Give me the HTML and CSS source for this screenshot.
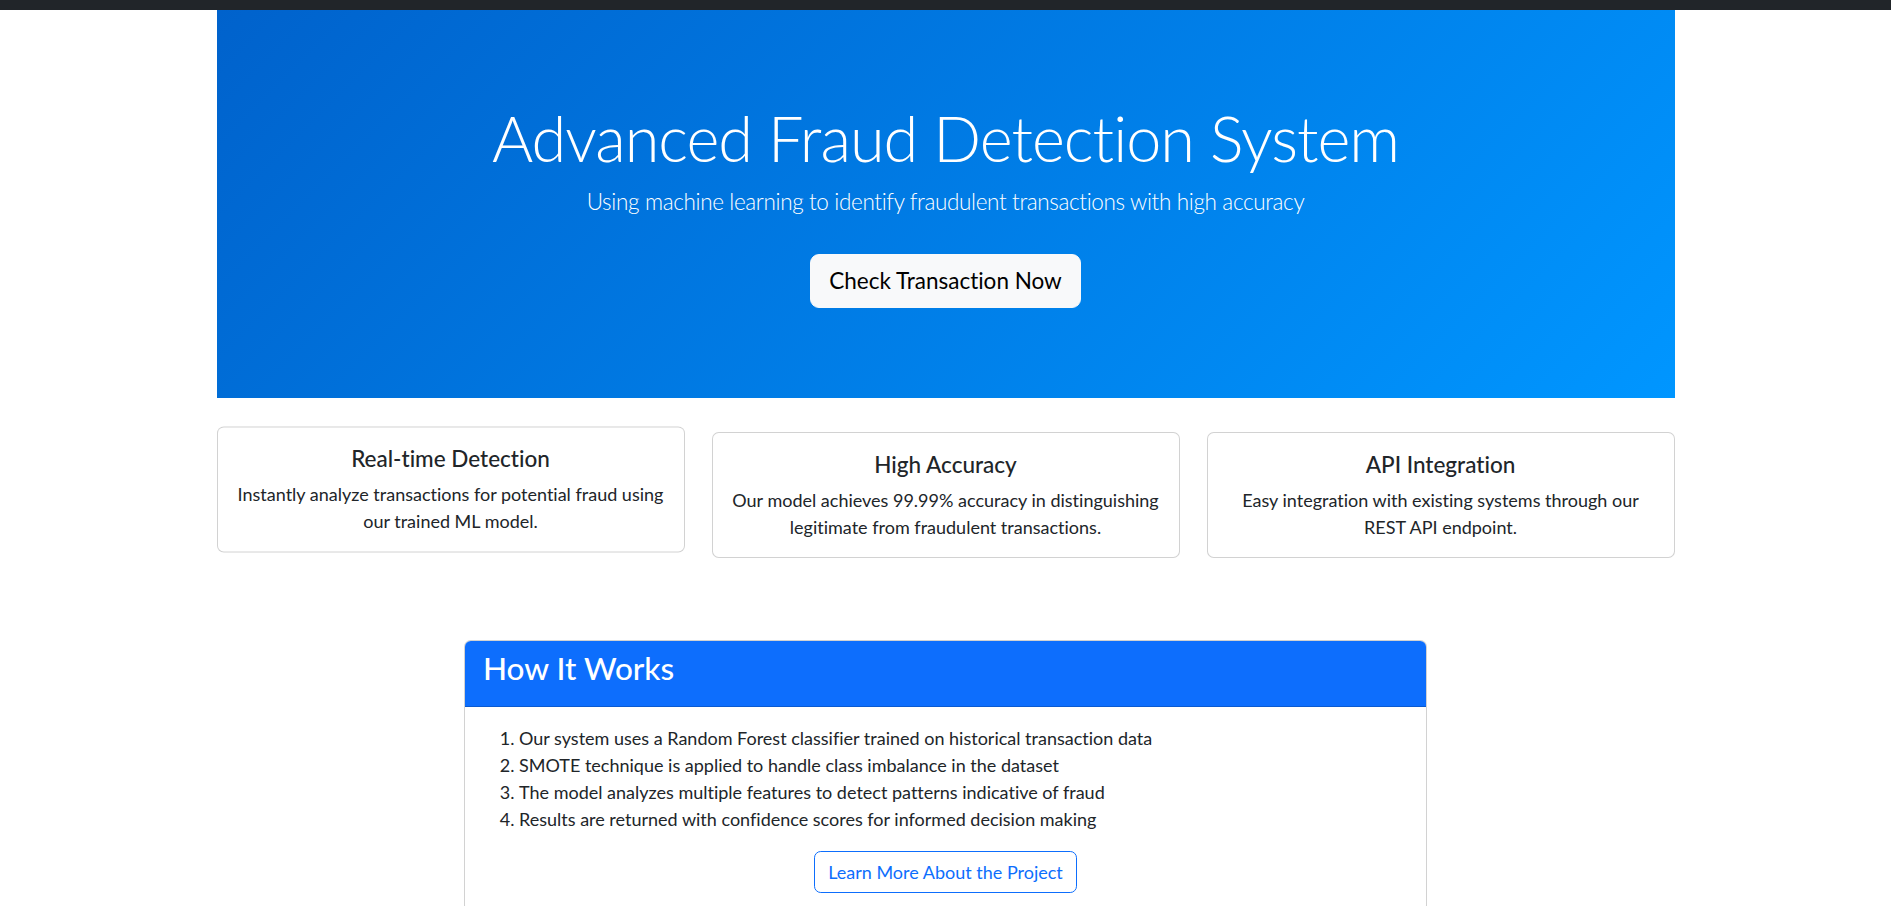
FILE: index.html
```html
<!DOCTYPE html>
<html lang="en">
<head>
<meta charset="utf-8">
<title>Fraud Detection System</title>
<link rel="stylesheet" href="styles.css">
</head>
<body>
<div class="topbar"></div>
<main class="container">
  <section class="hero">
    <h1 class="hero-title">Advanced Fraud Detection System</h1>
    <p class="hero-lead">Using machine learning to identify fraudulent transactions with high accuracy</p>
    <a class="btn btn-light btn-lg" href="#">Check Transaction Now</a>
  </section>

  <section class="features">
    <div class="card feature-card is-hover">
      <h5 class="card-title">Real-time Detection</h5>
      <p class="card-text">Instantly analyze transactions for potential fraud using our trained ML model.</p>
    </div>
    <div class="card feature-card">
      <h5 class="card-title">High Accuracy</h5>
      <p class="card-text">Our model achieves 99.99% accuracy in distinguishing legitimate from fraudulent transactions.</p>
    </div>
    <div class="card feature-card">
      <h5 class="card-title">API Integration</h5>
      <p class="card-text">Easy integration with existing systems through our REST API endpoint.</p>
    </div>
  </section>

  <section class="card how-card">
    <div class="how-header">
      <h3 class="how-title">How It Works</h3>
    </div>
    <div class="how-body">
      <ol class="how-list">
        <li>Our system uses a Random Forest classifier trained on historical transaction data</li>
        <li>SMOTE technique is applied to handle class imbalance in the dataset</li>
        <li>The model analyzes multiple features to detect patterns indicative of fraud</li>
        <li>Results are returned with confidence scores for informed decision making</li>
      </ol>
      <div class="how-actions">
        <a class="btn btn-outline-primary" href="#">Learn More About the Project</a>
      </div>
    </div>
  </section>
</main>
</body>
</html>
```
FILE: styles.css
```css
* { box-sizing: border-box; }

html, body {
  margin: 0;
  padding: 0;
  overflow: hidden;
}

body {
  font-family: Lato, "Noto Sans", sans-serif;
  font-size: 18px;
  line-height: 1.5;
  color: #212529;
  background: #fff;
  font-variant-ligatures: no-common-ligatures;
}

.topbar {
  height: 10px;
  background: #212529;
}

.container {
  width: 1458px;
  margin: 0 auto;
}

/* Hero */
.hero {
  padding: 90px 0;
  text-align: center;
  color: #fff;
  background: linear-gradient(135deg, #0062cc 0%, #0096ff 100%);
}

.hero-title {
  margin: 0 0 9px;
  font-size: 63px;
  font-weight: 300;
  line-height: 1.2;
  letter-spacing: -1px;
}

.hero-lead {
  margin: 0 0 36px;
  font-size: 22.5px;
  font-weight: 300;
  line-height: 1.5;
  letter-spacing: -0.35px;
}

/* Buttons */
.btn {
  display: inline-block;
  text-decoration: none;
  border: 1px solid transparent;
  text-align: center;
  vertical-align: middle;
}

.btn-lg {
  padding: 9px 18px;
  font-size: 22.5px;
  line-height: 1.5;
  border-radius: 9px;
}

.btn-light {
  color: #000;
  background: #f8f9fa;
  border-color: #f8f9fa;
}

.btn-outline-primary {
  padding: 6.75px 13.5px;
  font-size: 18px;
  line-height: 1.5;
  border-radius: 6.75px;
  color: #0d6efd;
  border-color: #0d6efd;
  background: transparent;
}

/* Cards */
.card {
  background: #fff;
  border: 1px solid rgba(0, 0, 0, 0.175);
  border-radius: 6.75px;
}

.features {
  display: grid;
  grid-template-columns: repeat(3, 1fr);
  gap: 27px;
  margin-top: 34px;
}

.feature-card {
  padding: 18px 18px 16px;
  text-align: center;
}

.feature-card.is-hover {
  transform: translateY(-5.6px);
}

.card-title {
  margin: 0 0 9px;
  font-size: 22.5px;
  font-weight: 500;
  line-height: 1.2;
}

.card-text {
  margin: 0;
}

/* How it works */
.how-card {
  width: 963px;
  margin: 82px auto 0;
  overflow: hidden;
}

.how-header {
  padding: 9px 18px;
  background: #0d6efd;
  color: #fff;
  border-bottom: 1px solid rgba(0, 0, 0, 0.175);
}

.how-title {
  margin: 0 0 9px;
  font-size: 31.5px;
  font-weight: 500;
  line-height: 1.2;
}

.how-body {
  padding: 18px;
}

.how-list {
  margin: 0 0 18px;
  padding-left: 36px;
}

.how-actions {
  text-align: center;
}
```
